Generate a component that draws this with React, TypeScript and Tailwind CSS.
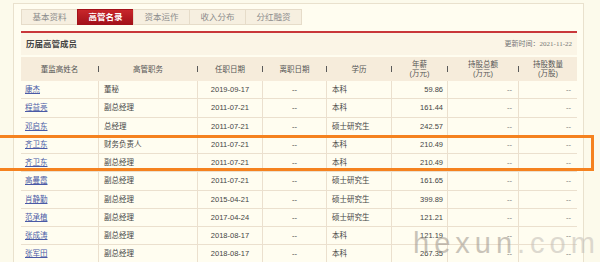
import React from "react";

const rows = [
  ["康杰", "董秘", "2019-09-17", "--", "本科", "59.86"],
  ["程益亮", "副总经理", "2011-07-21", "--", "本科", "161.44"],
  ["邓启东", "总经理", "2011-07-21", "--", "硕士研究生", "242.57"],
  ["齐卫东", "财务负责人", "2011-07-21", "--", "本科", "210.49"],
  ["齐卫东", "副总经理", "2011-07-21", "--", "本科", "210.49"],
  ["高曼霞", "副总经理", "2011-07-21", "--", "硕士研究生", "161.65"],
  ["肖静勤", "副总经理", "2015-04-21", "--", "硕士研究生", "399.89"],
  ["范承植", "副总经理", "2017-04-24", "--", "硕士研究生", "121.21"],
  ["张成涛", "副总经理", "2018-08-17", "--", "本科", "121.19"],
  ["张军田", "副总经理", "2018-08-17", "--", "本科", "267.35"],
];

const tabs = ["基本资料", "高管名录", "资本运作", "收入分布", "分红融资"];

function Sep() {
  return <div className="w-px h-[6px] bg-[#5a5a5a] shrink-0" />;
}

export default function App() {
  return (
    <div
      className="relative w-[600px] h-[262px] overflow-hidden bg-[#fcfaeb] text-[#444]"
      style={{ fontFamily: '"Liberation Sans", "Noto Sans CJK SC", sans-serif' }}
    >
      <div className="ml-[13px] mt-[3px] w-[571px] h-[300px] border-l border-t border-r border-[#e9e1cd] bg-[#fffdf0] pl-[7px] pr-[6px]">
        {/* tabs */}
        <div className="mt-[5px] flex h-[16px]">
          {tabs.map((t, i) => (
            <div
              key={t}
              className={
                i === 1
                  ? "w-[57px] h-[16px] -ml-px flex items-center justify-center text-[8.5px] font-bold text-white bg-gradient-to-b from-[#c8262b] to-[#a3111a] border border-[#a3111a]"
                  : "w-[57px] h-[16px] -ml-px first:ml-0 flex items-center justify-center text-[8.5px] text-[#8c8c8c] bg-[#f6efe0] border border-[#e6dcc9]"
              }
            >
              {t}
            </div>
          ))}
        </div>
        {/* red line */}
        <div className="mt-[6px] h-[2px] bg-[#c9373a]" />
        {/* title row */}
        <div className="h-[22px] bg-[#fbf5e6] flex items-center justify-between pl-[5px] pr-[5px]">
          <span className="text-[8.5px] text-[#444] font-semibold">历届高管成员</span>
          <span className="text-[7px] text-[#777]">
            更新时间：<span style={{ fontFamily: '"Liberation Serif", serif' }}>2021-11-22</span>
          </span>
        </div>
        {/* table */}
        <div className="mt-[2px] w-[556px]">
          <div className="h-[24px] bg-[#f6ecdb] flex items-center text-[7.5px] text-[#555] leading-[9px] text-center">
            <div className="w-[77px]">董监高姓名</div>
            <Sep />
            <div className="w-[98px]">高管职务</div>
            <Sep />
            <div className="w-[64px]">任职日期</div>
            <Sep />
            <div className="w-[63px]">离职日期</div>
            <Sep />
            <div className="w-[64px]">学历</div>
            <Sep />
            <div className="w-[55px]">年薪<br />(万元)</div>
            <Sep />
            <div className="w-[70px]">持股总额<br />(万元)</div>
            <Sep />
            <div className="w-[58px]">持股数量<br />(万股)</div>
          </div>
          {rows.map((r, i) => (
            <div
              key={i}
              className="h-[18.25px] grid grid-cols-[77px_99px_65px_64px_65px_56px_71px_59px] border-b border-[#ebe0ce] text-[7.5px] leading-[17px]"
            >
              <div className="pl-[4px]">
                <span className="text-[#4a5aa6] underline decoration-[#4a5aa6]">{r[0]}</span>
              </div>
              <div className="pl-[5px] border-l border-[#ebe0ce]">{r[1]}</div>
              <div className="text-center border-l border-[#ebe0ce]">{r[2]}</div>
              <div className="text-center border-l border-[#ebe0ce]">{r[3]}</div>
              <div className="pl-[5px] border-l border-[#ebe0ce]">{r[4]}</div>
              <div className="text-right pr-[4px] border-l border-[#ebe0ce]">{r[5]}</div>
              <div className="text-right pr-[6px] border-l border-[#ebe0ce] text-[#777]">--</div>
              <div className="text-right pr-[6px] border-l border-[#ebe0ce] text-[#777]">--</div>
            </div>
          ))}
        </div>
      </div>

      {/* highlight box */}
      <div className="absolute left-[-10px] top-[135px] w-[604px] h-[36px] border-[3px] border-[#f5821f]" />

      {/* watermark */}
      <div
        className="absolute left-[413px] top-[229px] text-[29px] tracking-[5px] text-[#9d958c] opacity-55 leading-none pointer-events-none"
        style={{ fontFamily: '"Liberation Sans", sans-serif' }}
      >
        hexun<span className="text-[#c2bcb5]">.com</span>
      </div>
    </div>
  );
}
